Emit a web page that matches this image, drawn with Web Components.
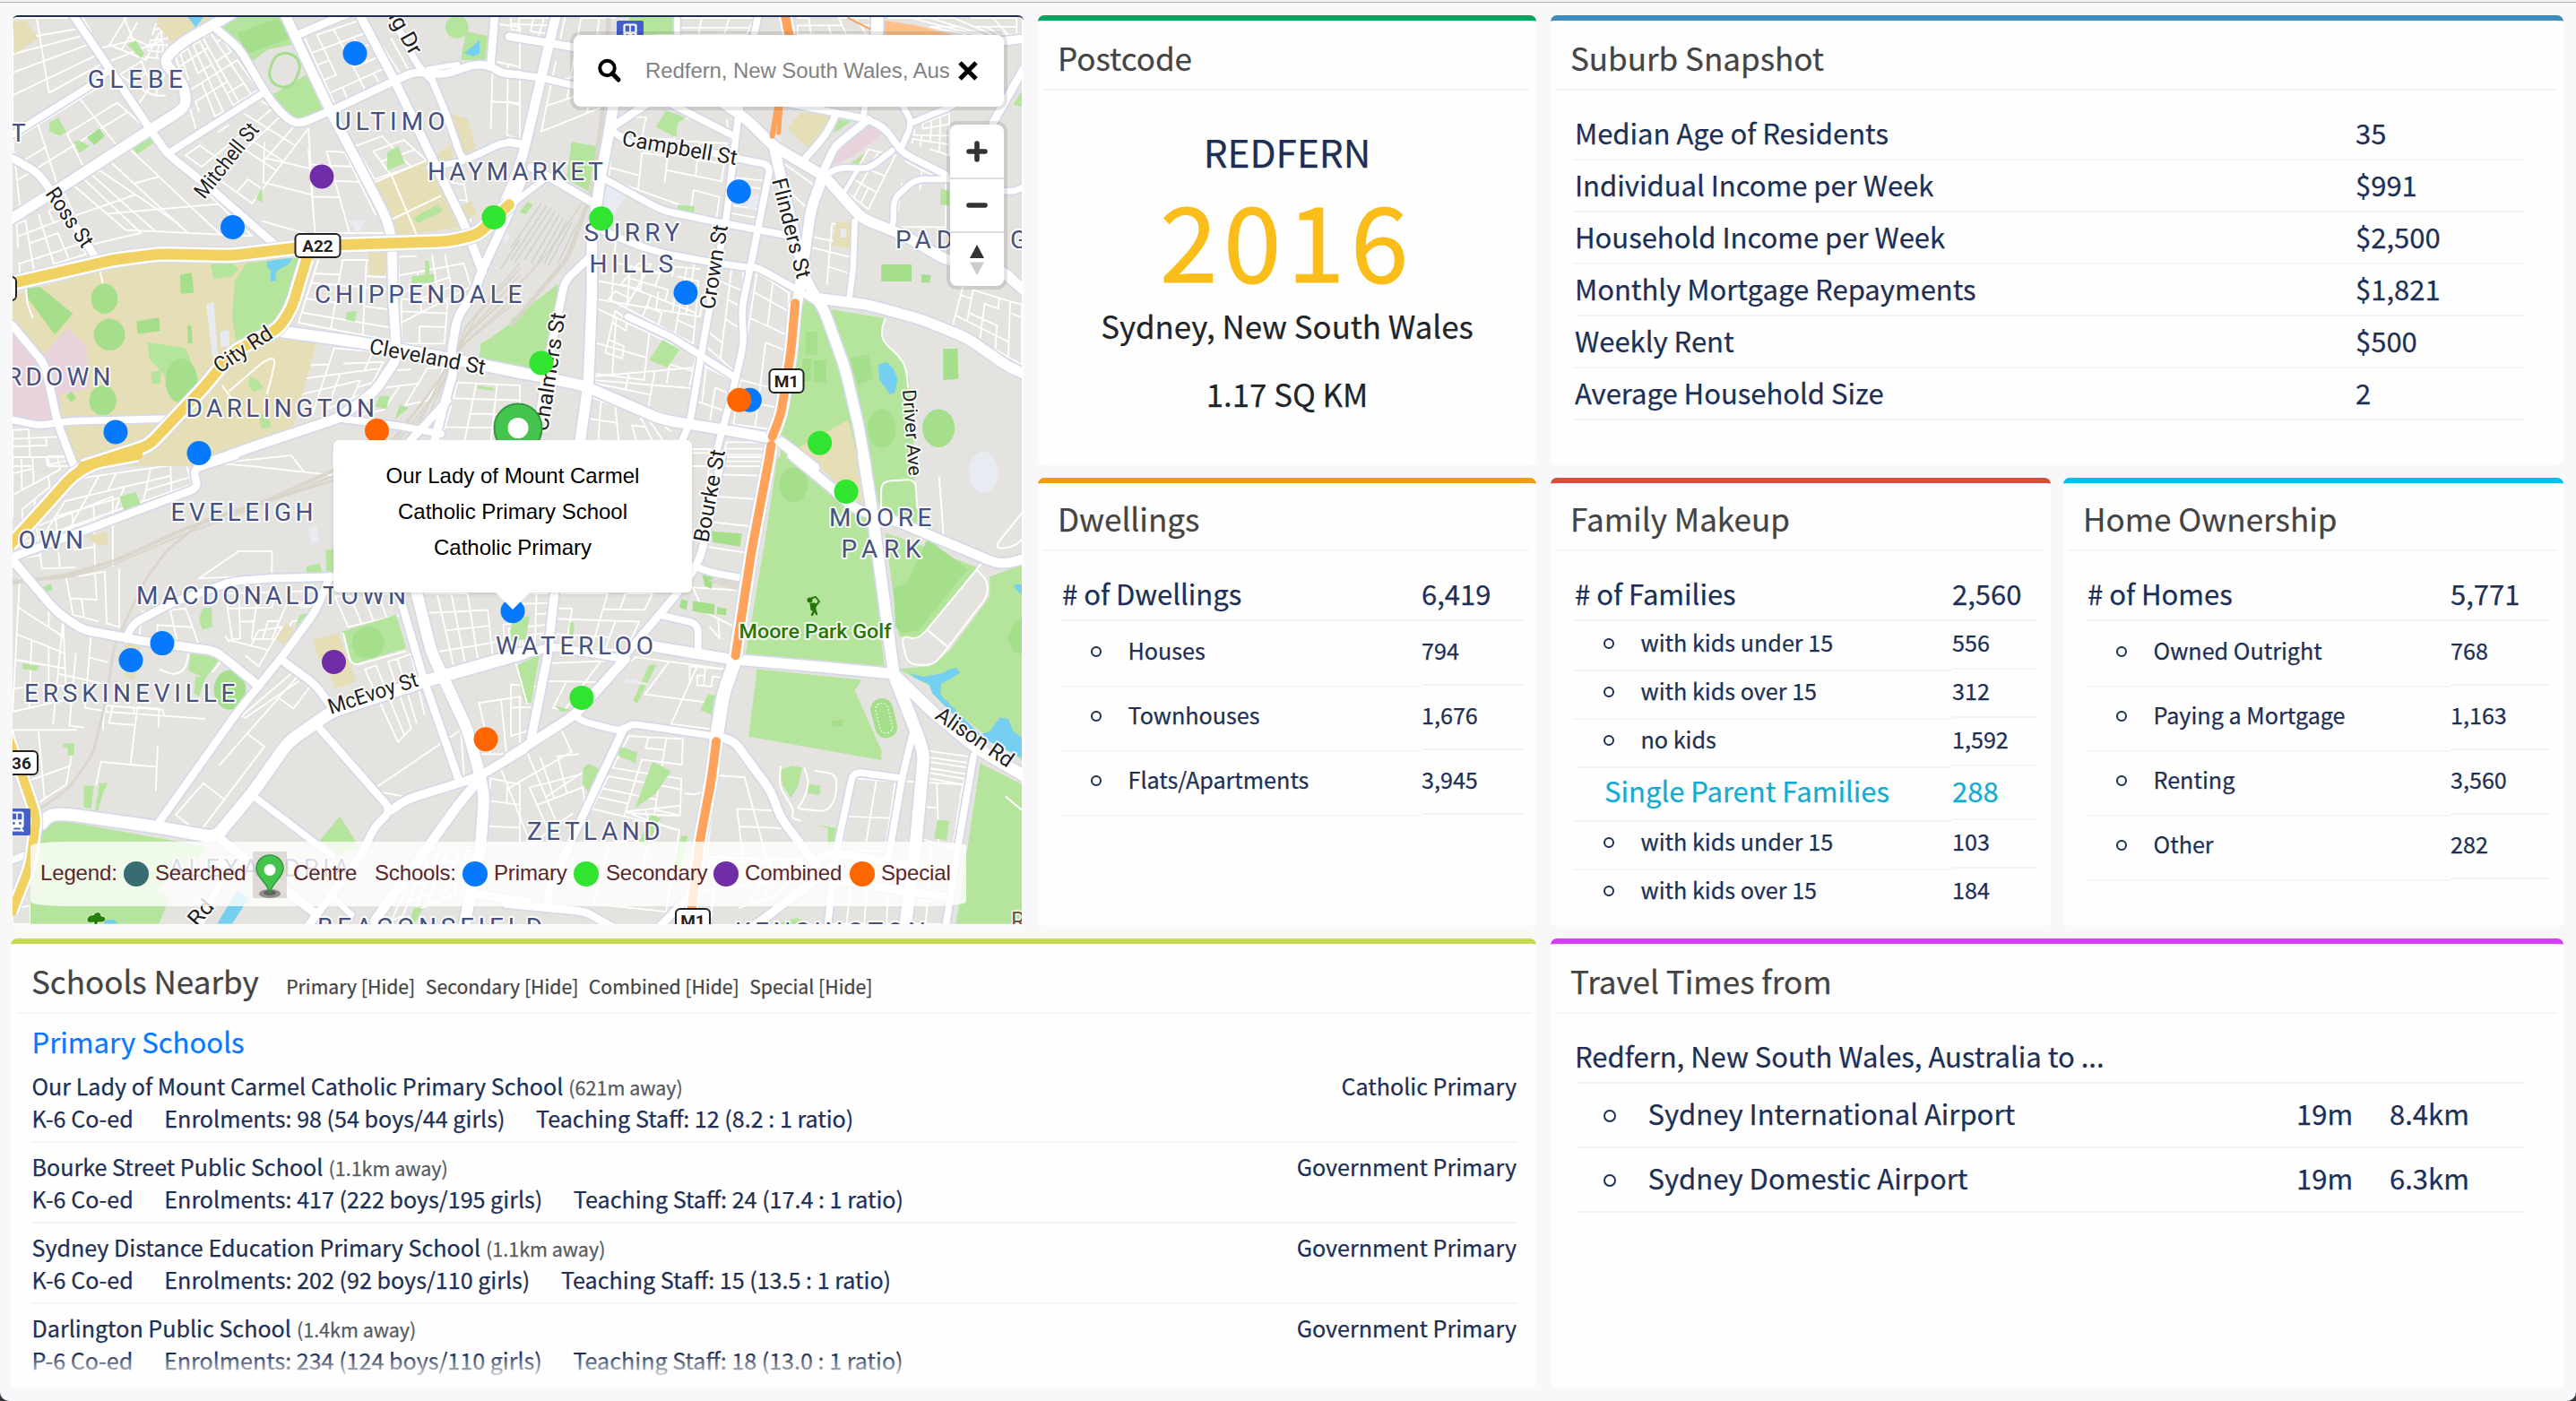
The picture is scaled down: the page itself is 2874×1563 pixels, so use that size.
<!DOCTYPE html>
<html lang="en">
<head>
<meta charset="utf-8">
<title>Suburb dashboard</title>
<style>
  html { background: #33363c; }
  body { margin: 0; width: 2874px; height: 1563px; overflow: hidden; font-family: "Noto Sans CJK SC", "Noto Sans", sans-serif; color: #1d2f54; }
</style>
</head>
<body>
<suburb-dashboard></suburb-dashboard>

<script>
const define = (name, html, setup) => {
  const tpl = document.createElement('template');
  tpl.innerHTML = html;
  customElements.define(name, class extends HTMLElement {
    connectedCallback() {
      if (this.shadowRoot) return;
      const root = this.attachShadow({ mode: 'open' });
      root.append(tpl.content.cloneNode(true));
      if (setup) setup.call(this, root);
    }
  });
};

/* ---------- cards ---------- */
define('info-card', `
<style>
  :host { display: flex; flex-direction: column; box-sizing: border-box; min-width: 0; overflow: hidden; background: #fefefe; border-top: 6px solid var(--accent); border-radius: 7px; -webkit-text-stroke: .25px; }
  header { display: flex; flex: none; align-items: baseline; box-sizing: border-box; height: var(--head, 78px); margin: 0 8px 0 6px; padding: var(--head-pad, 5px) 0 0 16px; border-bottom: 2px solid #f4f4f5; color: #444; font-size: 35px; line-height: 72px; }
  :host([wide]) header { margin: 0 6px 0 8px; padding-left: 15px; }
  h2 { margin: 0; font: inherit; white-space: nowrap; }
  .body { flex: 1; min-height: 0; display: flex; flex-direction: column; }
</style>
<header><h2></h2><slot name="extra"></slot></header>
<div class="body"><slot></slot></div>`, function (root) {
  root.querySelector('h2').textContent = this.getAttribute('heading');
});

define('data-row', `
<style>
  :host { display: flex; align-items: flex-start; height: var(--h, 58px); font-size: 31px; line-height: 54px; white-space: nowrap; }
  div { box-sizing: border-box; height: 100%; border-bottom: 2px solid #f4f4f5; }
  .label { width: var(--split); flex: none; padding-left: 1px; }
  .value { flex: 1; }
  i { display: none; box-sizing: border-box; flex: none; width: 12px; height: 12px; margin: 0 29.500px 0 33px; border: 2px solid #1d2f54; border-radius: 50%; }
  :host([kind=item]) { font-size: 25.15px; line-height: calc(var(--h) - 6.500px); }
  :host([kind=item]) .label { display: flex; align-items: flex-start; height: calc(100% + 2px); padding: 0; }
  :host([kind=item]) i { display: block; margin-top: calc(var(--h) / 2 - 8px); }
  :host([kind=group]) { color: #14abd0; line-height: 53px; }
  :host([kind=group]) .label { height: calc(100% + 2px); padding-left: 34px; }
  :host([plain]) div { border-color: transparent; }
</style>
<div class="label"><i></i><span class="t"></span></div><div class="value"></div>`, function (root) {
  root.querySelector('.t').textContent = this.getAttribute('label');
  root.querySelector('.value').textContent = this.getAttribute('value');
});

define('postcode-facts', `
<style>
  :host { display: flex; flex-direction: column; align-items: center; padding-top: 28px; color: #212529; font-size: 34.8px; white-space: nowrap; }
  .name { color: #1d2f54; font-size: 42.3px; line-height: 80px; }
  .code { color: #fbbd1a; font-size: 116px; line-height: 128px; letter-spacing: 6.6px; margin-top: -9px; -webkit-text-stroke: 1px; }
  .place { line-height: 76px; margin-top: -3px; }
  .area { line-height: 76px; }
</style>
<div class="name">REDFERN</div><div class="code">2016</div>
<div class="place">Sydney, New South Wales</div><div class="area">1.17 SQ KM</div>`);

define('school-filters', `
<style>
  :host { display: flex; gap: 11.500px; margin-left: 30.500px; font-size: 21.2px; line-height: 40px; white-space: nowrap; }
</style>
<span>Primary [Hide]</span><span>Secondary [Hide]</span><span>Combined [Hide]</span><span>Special [Hide]</span>`);

define('school-entry', `
<style>
  :host { display: block; flex: none; box-sizing: border-box; height: 90px; padding-top: 8px; border-bottom: 2px solid #f4f4f5; font-size: 25.1px; line-height: 36px; white-space: nowrap; }
  .line { display: flex; align-items: baseline; height: 36px; }
  .away { margin-left: 6px; color: #555a60; font-size: 21.5px; line-height: 30px; }
  .sector { margin-left: auto; }
  .facts { gap: 34.6px; }
</style>
<div class="line"><span class="name"></span><span class="away"></span><span class="sector"></span></div>
<div class="line facts"><span class="years"></span><span class="enrol"></span><span class="staff"></span></div>`, function (root) {
  for (const k of ['name', 'away', 'sector', 'years', 'enrol', 'staff']) root.querySelector('.' + k).textContent = this.dataset[k];
});

define('school-list', `
<style>
  :host { position: relative; display: flex; flex-direction: column; height: 410px; margin: 0 22px 0 23.500px; overflow: hidden; }
  h3 { flex: none; margin: 0; height: 58px; color: #0779ff; font: inherit; font-size: 31.1px; line-height: 61px; margin-bottom: -4px; }
  .fade { position: absolute; inset: auto 0 0 0; height: 30px; background: linear-gradient(rgba(254,254,254,0), #fefefe); }
</style>
<h3>Primary Schools</h3><slot></slot><div class="fade"></div>`);

define('travel-row', `
<style>
  :host { display: flex; align-items: flex-start; box-sizing: border-box; height: 72px; border-bottom: 2px solid #f4f4f5; font-size: 31px; line-height: 65px; white-space: nowrap; }
  i { box-sizing: border-box; flex: none; width: 14px; height: 14px; margin: 29px 30px 0 33px; border: 2px solid #1d2f54; border-radius: 50%; }
  .place { width: 729px; padding-left: 5.500px; box-sizing: border-box; } .time { width: 104px; }
</style>
<i></i><span class="place"></span><span class="time"></span><span class="dist"></span>`, function (root) {
  for (const k of ['place', 'time', 'dist']) root.querySelector('.' + k).textContent = this.dataset[k];
});

/* ---------- map controls ---------- */
define('map-search', `
<style>
  :host { display: flex; align-items: center; box-sizing: border-box; width: 480px; height: 80px; padding: 0 24px; background: #fff; border-radius: 8px; box-shadow: 0 0 0 4px rgba(0,0,0,.1); font: 24px "Liberation Sans", Arial, sans-serif; }
  svg { flex: none; }
  .q { width: 339px; margin: 0 5px 0 24px; overflow: hidden; color: #828282; white-space: nowrap; letter-spacing: -.08px; }
</style>
<svg width="32" height="32" viewBox="0 0 32 32" fill="none" stroke="#000"><circle cx="13.5" cy="13" r="8.2" stroke-width="4"/><path d="M19 18.800L26 26" stroke-width="5" stroke-linecap="round"/></svg>
<span class="q">Redfern, New South Wales, Australia</span>
<svg width="32" height="32" viewBox="0 0 32 32" fill="none" stroke="#000" stroke-width="5"><path d="M7 7L25 25M25 7L7 25"/></svg>`);

define('map-zoom', `
<style>
  :host { display: flex; flex-direction: column; width: 60px; height: 180px; background: #fff; border-radius: 8px; box-shadow: 0 0 0 4px rgba(0,0,0,.1); }
  div { flex: 1; display: grid; place-items: center; }
  div + div { border-top: 2px solid #ddd; }
</style>
<div><svg width="26" height="28" viewBox="-13 -15 26 28" stroke="#333" stroke-width="5.600" stroke-linecap="round"><path d="M-9 0H9M0 -9V9"/></svg></div>
<div><svg width="26" height="26" viewBox="-13 -13 26 26" stroke="#333" stroke-width="5.600" stroke-linecap="round"><path d="M-9 0H9"/></svg></div>
<div><svg width="20" height="36" viewBox="0 0 20 36"><path d="M10 1L18 16H2Z" fill="#333"/><path d="M2 20.500H18L10 35Z" fill="#ccc"/></svg></div>`);

define('map-popup', `
<style>
  :host { display: block; box-sizing: border-box; width: 400px; height: 170px; padding-top: 20px; background: #fff; border-radius: 6px; box-shadow: 0 2px 4px rgba(0,0,0,.12); color: #000; font: 24px/40px "Liberation Sans", Arial, sans-serif; text-align: center; }
  svg { position: absolute; left: 180px; top: 169px; }
</style>
<div>Our Lady of Mount Carmel</div><div>Catholic Primary School</div><div>Catholic Primary</div>
<svg width="40" height="21"><path d="M0 0H40L20 20Z" fill="#fff"/></svg>`);

const PIN = `<ellipse cx="0" cy="22" rx="12" ry="5" fill="#000" opacity=".35"/><ellipse cx="0" cy="21" rx="7" ry="3" fill="#000" opacity=".3"/><path d="M0 21C-3 9-15 4-15-6A15 15 0 0 1 15-6C15 4 3 9 0 21Z" fill="#45c44d" stroke="#329a3b" stroke-width="1.500"/><circle cy="-4.500" r="6.500" fill="#fff"/>`;

define('map-legend', `
<style>
  :host { display: flex; align-items: center; box-sizing: border-box; width: 1044px; height: 72px; padding-left: 11px; background: rgba(255,255,255,.8); border-radius: 40px / 5px; color: #5b2629; font: 24px "Liberation Sans", Arial, sans-serif; white-space: nowrap; letter-spacing: -.15px; }
  span { flex: none; box-sizing: border-box; padding-bottom: 3px; }
  i { flex: none; width: 28px; height: 28px; border-radius: 50%; }
  svg { flex: none; margin: 1px 7px 0 0; background: rgba(190,180,175,.45); }
</style>
<span style="width:93px">Legend:</span><i style="background:#376c72"></i><span style="width:116px;padding-left:7px">Searched</span>
<svg width="38" height="52" viewBox="-19 -26 38 52"><g transform="translate(0 -1)">${PIN}</g></svg>
<span style="width:91px">Centre</span><span style="width:98px">Schools:</span>
<i style="background:#0779ff"></i><span style="width:96px;padding-left:7px">Primary</span>
<i style="background:#30e430"></i><span style="width:128px;padding-left:8px">Secondary</span>
<i style="background:#6f2da8"></i><span style="width:124px;padding-left:7px">Combined</span>
<i style="background:#ff6600"></i><span style="padding-left:7px">Special</span>`);

/* ---------- street map ---------- */
/* The sheet is split in four tiles; each has its own origin and grid step. */
const TILES = {
  A: [0, 0, 2.703, 3], B: [570, 0, 2.658, 3], C: [0, 510, 2.703, 2.958], D: [570, 510, 2.658, 2.958]
};
const pt = (t, x, y) => { const [ox, oy, sx, sy] = TILES[t]; return [(ox + x / sx), (oy + y / sy)]; };
const pts = (t, s) => { const n = s.trim().split(/[\s,]+/).map(Number), out = []; for (let i = 0; i < n.length; i += 2) out.push(pt(t, n[i], n[i + 1])); return out; };
const f1 = v => v.toFixed(1);
const line = p => 'M' + p.map(q => f1(q[0]) + ' ' + f1(q[1])).join('L');
/* corners rounded by running quadratic curves through each bend */
const curve = p => {
  let d = `M${f1(p[0][0])} ${f1(p[0][1])}`;
  for (let i = 1; i < p.length - 1; i++) {
    const [a, b, c] = [p[i - 1], p[i], p[i + 1]];
    const la = Math.hypot(a[0] - b[0], a[1] - b[1]), lc = Math.hypot(c[0] - b[0], c[1] - b[1]);
    const ra = Math.min(.5, 10 / la), rc = Math.min(.5, 10 / lc);
    d += `L${f1(b[0] + (a[0] - b[0]) * ra)} ${f1(b[1] + (a[1] - b[1]) * ra)}Q${f1(b[0])} ${f1(b[1])} ${f1(b[0] + (c[0] - b[0]) * rc)} ${f1(b[1] + (c[1] - b[1]) * rc)}`;
  }
  const e = p[p.length - 1];
  return d + `L${f1(e[0])} ${f1(e[1])}`;
};

const GREEN = '#b5e59d', DARK = '#a6df8c', TAN = '#e6deb6', PINK = '#e8d2db', WATER = '#75cff0', SLAB = '#e9ebf2';

const AREAS = [
  ['A', TAN, '38,990 340,890 480,872 720,870 950,860 890,1020 870,1110 955,1150 880,1440 600,1560 210,1560 190,1400 160,1300 120,1170 38,1080'],
  ['A', PINK, '38,1120 70,1135 120,1195 205,1098 260,1160 270,1300 180,1320 185,1400 120,1410 38,1395'],
  ['A', GREEN, '690,55 850,55 880,150 810,165 760,205 720,140 665,85'],
  ['A', DARK, '715,110 840,60 872,130 745,180'],
  ['A', GREEN, '820,318 925,250 975,365 905,400 870,385'],
  ['A', GREEN, '1405,105 1470,120 1463,203 1390,200'],
  ['A', WATER, '1430,150 1447,133 1446,180 1425,188 1400,178'],
  ['A', TAN, '475,55 640,55 600,90 520,145 475,85'],
  ['A', WATER, '565,55 615,55 590,92'],
  ['A', TAN, '38,75 75,65 115,130 45,180'],
  ['A', GREEN, '385,150 410,135 435,180 425,195'], ['A', GREEN, '150,410 175,393 200,440 180,455 148,438'],
  ['A', GREEN, '222,475 240,470 270,490 240,512'], ['A', DARK, '262,460 300,430 315,455 285,485'],
  ['A', GREEN, '398,495 450,460 462,480 415,515'], ['A', GREEN, '1168,510 1200,488 1222,545 1168,570'],
  ['A', GREEN, '772,665 790,625 792,678'],
  ['A', TAN, '1130,610 1290,535 1390,760 1200,790'], ['A', GREEN, '1245,730 1320,685 1337,705 1260,748'],
  ['A', TAN, '1360,385 1410,395 1435,500 1398,515'], ['A', TAN, '1315,515 1360,490 1370,540 1340,555'],
  ['A', TAN, '1390,690 1420,672 1438,715 1405,740'], ['A', TAN, '1110,845 1165,845 1162,920 1115,922'],
  ['A', GREEN, '745,880 905,862 880,1010 840,1090 715,1165 700,1060 708,940'],
  ['A', WATER, '805,875 840,868 882,864 870,885 842,900 830,915 833,940 815,942 818,905 805,892'],
  ['A', DARK, '80,965 120,960 220,1050 165,1120 85,1000'],
  ['A', DARK, '412,1075 480,1063 483,1108 415,1118'], ['A', DARK, '543,920 578,912 585,980 545,983'],
  ['A', GREEN, '635,885 700,880 720,900 700,925 645,935'],
  ['A', GREEN, '445,1145 560,1165 605,1290 545,1350 500,1260 450,1200'], ['A', GREEN, '455,1245 485,1240 485,1285 458,1285'],
  ['A', DARK, '200,1325 215,1312 230,1330 215,1348'], ['A', DARK, '565,1090 577,1090 580,1150 567,1150'],
  ['A', SLAB, '622,1018 645,1012 657,1195 640,1190'], ['A', SLAB, '665,1110 690,1105 692,1160 665,1160'], ['A', SLAB, '1045,740 1100,735 1085,780 1070,778 1065,750'],
  ['A', SLAB, '1500,790 1515,765 1538,790 1525,815'],
  ['A', GREEN, '755,1260 780,1275 795,1300 765,1312 748,1290'],
  ['A', GREEN, '1568,1060 1480,1130 1450,1150 1445,1200 1568,1230'],
  ['A', GREEN, '1150,1290 1170,1248 1180,1255 1160,1300'], ['A', GREEN, '1145,1325 1175,1325 1165,1370 1132,1360'],
  ['A', GREEN, '1045,1045 1075,1040 1070,1078 1043,1070'], ['A', GREEN, '1242,925 1282,920 1282,873 1294,873 1296,918 1310,918 1308,945 1242,948'],
  ['A', GREEN, '1440,1290 1490,1298 1487,1308 1440,1300'], ['A', GREEN, '900,1450 940,1440 943,1448 905,1465'],
  ['A', GREEN, '778,1390 805,1385 820,1430 790,1435'], ['A', GREEN, '1190,1405 1205,1355 1232,1365'],

  ['B', GREEN, '870,1000 930,1020 990,1240 1010,1410 1060,1560 798,1560 800,1460 830,1250'],
  ['B', TAN, '1000,1405 1035,1560 890,1560 850,1500'],
  ['B', GREEN, '945,1035 1110,1065 1100,1130 1160,1200 1180,1260 1200,1560 1065,1560 1000,1230'],
  ['B', WATER, '1090,1220 1115,1212 1135,1235 1147,1270 1138,1315 1125,1320 1092,1270'],
  ['B', DARK, '1282,1167 1325,1167 1327,1268 1282,1272'], ['B', DARK, '1098,885 1188,885 1188,942 1098,942'], ['B', DARK, '1218,918 1245,920 1243,946 1218,946'],
  ['B', DARK, '1005,1200 1060,1185 1075,1265 1030,1290'], ['B', DARK, '875,1110 908,1110 908,1187 873,1185'], ['B', DARK, '898,1205 935,1205 935,1280 898,1280'], ['B', DARK, '865,1200 890,1200 890,1275 862,1275'],
  ['B', GREEN, '460,370 520,395 495,410 490,460 430,425'], ['B', GREEN, '180,475 255,490 230,640 165,600'],
  ['B', TAN, '860,375 950,390 940,440 880,495 820,430'], ['B', GREEN, '970,400 1010,405 958,445'],
  ['B', PINK, '1050,410 1110,440 1020,520 930,565 950,520'], ['B', GREEN, '1005,550 1050,510 1030,555'],
  ['B', GREEN, '495,685 545,690 543,712 495,705'], ['B', GREEN, '450,1137 500,1170 465,1230 410,1205'],
  ['B', TAN, '965,740 1010,745 1003,832 953,822'], ['B', SLAB, '978,765 995,765 993,795 978,795'],
  ['B', GREEN, '0,1070 140,950 135,1040 110,1200 95,1250 0,1230'], ['B', GREEN, '350,50 487,50 485,115 350,115'],
  ['B', GREEN, '1275,630 1300,640 1300,688 1273,685'], ['B', GREEN, '25,710 50,675 65,685 45,717'], ['B', GREEN, '612,900 625,905 615,975 603,975'],
  ['B', GREEN, '1490,350 1515,305 1515,357'], ['B', SLAB, '285,610 343,655 300,730 268,735'], ['B', SLAB, '700,690 712,655 738,650 738,678 720,705 705,700'],
  ['B', '#ffc08c', '1108,68 1200,85 1310,117 1108,117'], ['B', SLAB, '775,440 800,450 805,510 772,500'],
  ['B', SLAB, '1360,1560 1370,1530 1400,1517 1430,1530 1445,1560'],

  ['C', GREEN, '130,1210 190,1200 620,1285 510,1455 480,1540 92,1540 92,1280'],
  ['C', GREEN, '1032,575 1195,520 1225,630 1060,685'], ['C', TAN, '943,605 1020,580 1040,640 1058,690 1075,740 1010,765 985,680 960,660'],
  ['C', GREEN, '360,130 410,115 425,160 375,178'], ['C', TAN, '258,262 320,245 325,285 300,295'],
  ['C', GREEN, '575,645 668,655 640,700 620,730 568,705'], ['C', GREEN, '590,725 620,725 600,790 585,780'],
  ['C', GREEN, '610,500 638,495 640,560 610,570 600,535'], ['C', TAN, '865,548 890,575 858,622 832,600'], ['C', GREEN, '905,520 930,515 888,565'],
  ['C', GREEN, '923,360 965,350 970,380 925,382'], ['C', GREEN, '982,308 1006,303 1006,382 985,375'], ['C', GREEN, '122,430 155,418 158,440 130,447'],
  ['C', GREEN, '68,680 120,690 110,705 68,700'], ['C', GREEN, '190,945 225,945 222,985 205,985 205,960 190,955'],
  ['C', GREEN, '253,1085 283,1085 280,1110 275,1160 253,1155'], ['C', GREEN, '300,1075 325,1075 310,1110 295,1170 287,1165'],
  ['C', GREEN, '1025,1185 1085,1290 1000,1320 965,1265'], ['C', TAN, '375,620 425,615 420,650 405,735 378,730'],
  ['C', WATER, '715,1430 750,1455 700,1540 655,1540'], ['C', '#e9dfd9', '630,1290 700,1300 520,1460 470,1430'],
  ['C', WATER, '315,1528 345,1526 355,1540 315,1540'], ['C', GREEN, '1250,1485 1275,1490 1250,1540 1232,1540'],
  ['C', SLAB, '930,235 955,228 962,280 940,285'],

  ['D', GREEN, '790,0 830,0 900,60 1020,180 1060,180 1107,692 695,655 750,300'], ['D', TAN, '885,0 1025,0 1042,155 1010,130'],
  ['D', GREEN, '1060,0 1185,0 1205,130 1205,230 1130,190 1085,150'],
  ['D', GREEN, '1110,250 1200,285 1385,365 1220,590 1200,600 1150,590'], ['D', DARK, '1135,430 1175,415 1235,270 1355,370 1210,570 1160,583 1140,560'],
  ['D', GREEN, '1420,395 1515,355 1515,1000 1400,910 1330,850 1250,760 1150,700 1240,690 1300,640 1420,460'],
  ['D', GREEN, '730,700 1040,735 1020,770 1100,970 1098,1000 705,922'],
  ['D', GREEN, '1392,1010 1515,1080 1515,1540 1320,1540'],
  ['D', WATER, '1185,715 1225,725 1280,713 1300,700 1322,695 1332,712 1275,750 1275,785 1350,870 1392,915 1420,905 1450,860 1475,863 1490,905 1515,925 1515,992 1440,950 1392,925 1340,880 1250,780 1240,750 1195,728'],
  ['D', WATER, '1490,420 1515,420 1515,452 1500,440'],
  ['D', DARK, '595,245 685,252 680,295 640,288 598,280'], ['D', DARK, '505,468 525,475 520,505 500,495'], ['D', DARK, '540,475 605,485 602,520 538,508'], ['D', DARK, '612,495 640,500 638,522 612,518'],
  ['D', GREEN, '15,690 85,650 60,810 40,810'], ['D', GREEN, '0,560 10,530 55,525 45,600 0,610'],
  ['D', GREEN, '410,685 432,685 375,812 362,805'], ['D', GREEN, '562,835 585,782 605,787 595,850'],
  ['D', GREEN, '325,955 375,975 370,1010 318,985'], ['D', GREEN, '420,1005 475,1035 430,1110 368,1158'],
  ['D', GREEN, '215,1025 230,1012 265,1030 235,1115 213,1078'], ['D', GREEN, '800,1030 835,1018 865,1025 850,1090 830,1125 805,1080'],
  ['D', GREEN, '880,1078 918,1085 915,1115 880,1108'], ['D', GREEN, '910,1215 972,1225 965,1275 940,1280 940,1225'],
  ['D', GREEN, '1265,1197 1300,1200 1292,1265 1255,1258'], ['D', GREEN, '505,1250 525,1250 500,1370 480,1350'],
  ['D', GREEN, '800,1535 850,1520 890,1545 800,1545'], ['D', GREEN, '130,820 180,835 150,842'], ['D', GREEN, '415,1180 445,1190 400,1290 380,1270'],
  ['D', DARK, '568,390 600,392 595,435 575,425'], ['D', GREEN, '175,545 188,545 185,600 172,600'],
  ['D', DARK, '950,870 985,865 985,885 950,892'], ['D', DARK, '1515,530 1490,550 1472,600 1490,640 1515,650'],
  ['D', SLAB, '340,730 405,745 415,755 340,742'], ['D', '#ddd9d0', '585,405 680,400 670,440 600,415']
];
const BLOBS = [ // tile, colour, centre, radii
  ['A', GREEN, 1378, 90, 35, 38], ['A', DARK, 315, 1000, 40, 50], ['A', DARK, 330, 1120, 47, 53], ['A', DARK, 310, 1340, 41, 50], ['A', DARK, 547, 1275, 48, 75],
  ['B', DARK, 1268, 1433, 48, 64], ['B', DARK, 1100, 1435, 42, 65], ['C', DARK, 1110, 612, 49, 53], ['C', DARK, 693, 768, 48, 65],
  ['D', DARK, 838, 92, 42, 58], ['D', SLAB, 1402, 50, 43, 68]
];
/* quads of local streets: tile, four corners, divisions across and down */
const BLOCKS = [
  ['A', '38,60 220,60 330,240 38,440', 2, 6], ['A', '38,470 300,290 440,430 60,690', 4, 3], ['A', '250,60 480,60 500,240 430,410', 2, 7],
  ['A', '530,190 650,100 780,300 590,430', 7, 6], ['A', '470,80 510,60 500,200 440,190', 2, 6], ['A', '200,600 450,460 760,790 380,770', 4, 3], ['A', '190,640 300,570 540,750 270,820', 2, 2],
  ['A', '560,520 790,340 930,430 760,680', 5, 4], ['A', '800,400 930,430 950,790 790,740', 1, 5], ['A', '930,500 1040,510 1160,780 950,780', 2, 5],
  ['A', '1070,490 1190,440 1290,540 1130,600', 3, 3], ['A', '920,130 1080,70 1180,260 1010,350', 4, 5], ['A', '1100,120 1180,130 1240,250 1190,260', 2, 2],
  ['A', '50,750 180,690 260,850 60,920', 4, 4], ['A', '960,870 1170,870 1180,1140 900,1080', 3, 5], ['A', '1200,860 1390,850 1420,960 1210,1080', 4, 4],
  ['A', '950,1160 1170,1180 1110,1310 880,1420', 4, 5], ['A', '1380,1280 1568,1290 1568,1475 1330,1475', 3, 4], ['A', '1180,1240 1340,1230 1290,1340 1080,1390', 3, 2],
  ['A', '38,1440 190,1430 210,1560 38,1560', 3, 4], ['A', '220,1430 480,1430 430,1490 230,1550', 3, 2], ['A', '560,1440 880,1430 740,1480 610,1540', 3, 1],
  ['A', '1490,80 1568,90 1568,470 1480,430', 2, 3], ['A', '1290,540 1390,560 1420,740 1370,740', 2, 3], ['A', '1210,1000 1350,1010 1340,1150 1210,1150', 2, 3], ['A', '380,60 480,110 440,200 330,150', 3, 2],
  ['B', '0,60 125,60 100,140 0,120', 4, 3], ['B', '160,60 310,60 290,350 90,440', 3, 5], ['B', '300,460 640,480 610,730 290,600', 4, 4], ['B', '660,560 765,570 730,760 635,740', 1, 6],
  ['B', '260,790 590,880 560,1060 250,1000', 7, 3], ['B', '380,880 560,900 540,1150 290,1000', 5, 5], ['B', '250,1030 550,1190 530,1290 240,1250', 4, 2], ['B', '620,880 690,900 670,1250 570,1150', 2, 5],
  ['B', '240,1260 545,1230 520,1410 230,1290', 3, 3], ['B', '550,1210 650,1270 620,1430 535,1410', 3, 3], ['B', '240,1330 440,1410 505,1475 220,1475', 6, 2], ['B', '730,910 825,980 790,1440 660,1420', 2, 7],
  ['B', '890,740 1010,755 1000,980 870,920', 2, 4], ['B', '800,540 900,620 860,780 810,700', 1, 4], ['B', '1170,540 1290,610 1290,760 1140,760', 2, 3], ['B', '1340,960 1515,1020 1515,1220 1310,1090', 5, 4],
  ['B', '1200,420 1300,380 1300,520 1190,480', 4, 4], ['B', '850,60 1060,60 1100,115 850,115', 5, 2], ['B', '430,60 720,60 700,115 430,115', 4, 2], ['B', '1120,60 1500,60 1500,115 1350,115', 6, 2],
  ['B', '1060,500 1140,520 1060,700 990,640', 3, 3], ['B', '330,390 640,400 650,470 310,460', 4, 1], ['B', '520,1480 610,1480 600,1560 520,1560', 1, 4], ['B', '640,1480 760,1480 750,1560 620,1560', 1, 4], ['B', '310,1040 345,1070 330,1200 280,1180', 1, 3],
  ['C', '38,0 200,0 220,50 38,260', 5, 4], ['C', '240,70 560,20 580,90 130,260', 6, 3], ['C', '38,260 340,130 340,360 60,370', 5, 3], ['C', '200,400 360,370 360,560 220,520', 4, 2],
  ['C', '60,390 190,530 200,800 38,840', 3, 5], ['C', '190,540 330,590 310,900 160,880', 3, 4], ['C', '38,900 230,900 200,1080 90,1160', 2, 3], ['C', '340,820 480,830 470,1100 290,1080', 2, 4],
  ['C', '430,510 560,500 600,620 420,590', 3, 2], ['C', '680,450 980,440 880,600 700,600', 6, 3], ['C', '680,590 850,560 780,690 690,610', 2, 2], ['C', '320,820 690,850 700,870 320,840', 4, 1],
  ['C', '900,720 940,750 600,1240 530,1180', 1, 5], ['C', '720,850 860,700 900,740 740,860', 1, 2], ['C', '1010,460 1190,450 1210,520 1050,560', 4, 1], ['C', '1100,700 1240,650 1280,850 1200,940', 4, 1],
  ['C', '1270,450 1568,450 1568,640 1330,700', 6, 4], ['C', '1390,820 1568,790 1568,980 1440,980', 3, 1], ['C', '1120,1100 1390,900 1400,1060 1220,1120', 1, 1], ['C', '1280,1290 1430,1300 1400,1430 1180,1530', 6, 4], ['C', '38,1490 92,1480 92,1540 38,1540', 2, 1], ['C', '600,400 720,310 820,310 820,390', 1, 1],
  ['C', '650,20 1006,-20 1006,60 760,30', 3, 1], ['C', '1480,1060 1568,1080 1568,1280 1460,1280', 2, 3],
  ['D', '130,450 420,450 340,640 120,620', 4, 4], ['D', '-20,450 115,450 100,620 0,640', 3, 5], ['D', '590,0 745,0 700,380 560,350', 1, 5], ['D', '540,430 680,440 650,640 590,560', 2, 2], ['D', '530,690 630,700 620,760 530,750', 4, 2],
  ['D', '370,660 640,700 610,900 190,840', 3, 2], ['D', '120,680 330,670 190,840 90,820', 3, 2], ['D', '350,920 510,930 500,1230 240,1160', 3, 7], ['D', '-40,1000 150,900 240,1120 60,1280', 2, 3], ['D', '20,1000 200,980 220,1150 110,1230', 3, 3],
  ['D', '610,1050 740,1060 860,1330 580,1320', 3, 3], ['D', '1170,1070 1340,1080 1310,1290 1220,1260', 2, 2], ['D', '1240,970 1370,990 1340,1080 1240,1060', 1, 5], ['D', '1020,1060 1140,1070 1110,1300 980,1300', 2, 2],
  ['D', '560,1330 880,1340 780,1450 560,1530', 6, 2], ['D', '970,1370 1160,1380 1160,1540 950,1540', 4, 3], ['D', '1190,1280 1310,1300 1290,1540 1180,1540', 2, 3], ['D', '170,1300 500,1230 460,1500 120,1460', 3, 2], ['D', '340,1170 500,1150 490,1230 360,1180', 3, 2], ['D', '0,750 100,760 60,900 0,920', 1, 2]
];
const LANES = [
  ['B', '1110,1065 1098,1110 1105,1145 1150,1190 1172,1230 1178,1300'], ['D', '1380,370 1412,405 1415,455 1260,680 1225,688 1175,680 1158,590 1195,600 1220,588 1395,352'],
  ['D', '1232,568 1298,628'], ['D', '1270,65 1283,260'], ['D', '1515,185 1435,295 1460,303 1500,290 1515,270'], ['D', '1098,170 1098,80 1200,73 1205,170'],
  ['A', '670,1290 720,1370'], ['A', '690,1310 800,1205 828,1198 828,1220 805,1320'], ['A', '300,900 310,948'], ['A', '78,960 82,1020 100,1065'],
  ['A', '1180,735 1330,655'], ['A', '1130,610 1290,535'], ['A', '1180,585 1258,790'], ['D', '800,1020 795,1085 840,1165 830,1190 860,1200'], ['D', '870,1025 885,1075 865,1140 845,1160 940,1170 965,1120 965,1045 900,1035'],
  ['C', '1035,580 1060,690 1225,640'], ['C', '480,700 525,720 560,700 570,640'], ['D', '515,1110 560,1115 610,1050'], ['D', '15,680 48,815'], ['C', '640,710 670,668'],
  ['A', '1480,340 1568,345'], ['A', '330,230 460,320 500,320'], ['D', '1467,1120 1515,1165']
];
const MAJORS = [ // tile, width, points
  ['A', 9, '220,50 330,230 445,420 505,515 640,635 830,820'], ['A', 12, '35,732 180,630 445,440 545,370 562,345 555,290 530,250 498,215 505,185 560,135 640,85 700,45'],
  ['A', 8, '38,450 290,275 330,230'], ['A', 9, '38,530 110,575 170,660 230,760 290,865'], ['A', 9, '640,85 720,160 800,310 840,370 880,408 910,412 1000,370 1190,270 1250,240 1340,250 1430,215 1480,220 1510,245 1568,250'],
  ['A', 8, '505,515 795,310'], ['A', 11, '860,50 910,170 1000,380 1100,590 1165,730 1182,800 1185,1000 1197,1200 1130,1310 1020,1400 750,1500 600,1560'],
  ['A', 10, '1085,50 1190,270 1290,500 1400,750 1455,910'], ['A', 9, '900,115 1050,45'], ['A', 8, '1300,260 1345,380 1395,540 1520,475 1575,482'], ['A', 7, '1295,560 1395,540'],
  ['A', 8, '1180,50 1260,220 1300,265'], ['A', 6, '1290,232 1380,215'], ['A', 9, '1492,50 1480,215'], ['A', 10, '1575,600 1540,700 1455,900 1430,980 1380,1060 1360,1180 1370,1240 1345,1330 1310,1480'],
  ['A', 9, '1350,1340 1225,1490'], ['A', 13, '850,1110 1050,1140 1180,1165 1360,1200 1580,1250'], ['A', 9, '38,1090 135,1220 175,1420 225,1565'], ['A', 8, '30,1403 120,1425 200,1410 540,1400'], ['A', 8, '1020,1400 1200,1425 1330,1452'],
  ['B', 9, '-5,122 120,145 195,160'], ['B', 11, '135,45 90,260 40,500 15,590 -20,680'], ['B', 9, '-5,475 40,485'], ['B', 7, '-5,690 110,590'], ['B', 9, '60,560 110,590 245,680'], ['B', 8, '-5,247 90,260 200,290'],
  ['B', 12, '305,345 290,450 265,600 240,800 240,1000 230,1280 205,1480'], ['B', 9, '300,425 400,350'], ['B', 8, '295,435 350,475'], ['B', 8, '590,510 690,535 770,552 710,895 685,1030 690,1150 660,1300 610,1510'],
  ['B', 8, '470,345 660,455'], ['B', 12, '630,345 700,400 780,490 930,590 1040,730 1170,790 1290,870 1450,900 1520,970'], ['B', 8, '733,50 675,380 640,720 610,900 570,1150 530,1420 505,1480'],
  ['B', 8, '280,600 450,705 620,745 830,790'], ['B', 8, '250,760 370,820 460,850 580,875 700,895 730,895 850,970 900,1005'], ['B', 9, '235,860 160,940 140,1050 100,1270 75,1475'],
  ['B', 12, '-5,1240 215,1290 450,1405 640,1440 790,1470 900,1565'], ['B', 8, '347,1060 480,1130 660,1260'], ['B', 12, '780,490 810,640 875,940 930,1040 990,1230 1030,1420 1052,1560'],
  ['B', 12, '925,590 890,700 865,900 850,1010'], ['B', 9, '1060,400 960,490 920,590'], ['B', 8, '965,380 935,450 865,540'], ['B', 8, '820,345 1060,400 1110,430 1160,510 1290,585'], ['B', 7, '1050,350 1045,400'],
  ['B', 7, '930,590 970,560 1060,565 1130,505'], ['B', 5, '1030,565 990,640'], ['B', 7, '1020,740 1015,900 1002,1010'], ['B', 7, '1120,770 1135,750 1135,665 1200,600 1300,600'], ['B', 12, '920,1000 1060,1020 1220,1070 1350,1130 1480,1230 1520,1250'],
  ['B', 7, '1160,490 1190,410 1160,350'], ['B', 7, '1190,410 1310,355'], ['B', 9, '1520,230 1430,410'], ['B', 7, '1460,640 1495,640 1520,625'], ['B', 7, '493,50 493,120'], ['B', 14, '1087,50 1085,120'], ['B', 10, '1360,150 1520,130'],
  ['C', 9, '710,-5 580,40 600,100 320,215 38,330'], ['C', 10, '38,340 170,510 250,570 420,605 650,640 780,755'], ['C', 9, '380,600 400,550 520,480 700,410 820,400 1010,395'], ['C', 9, '995,395 950,510 850,660 710,850 470,1220'],
  ['C', 9, '850,670 950,750 1000,825'], ['C', 14, '125,1210 150,1180 200,1178 470,1220 650,1255 760,1110 870,940 1000,840 1280,740 1575,648'], ['C', 9, '1200,440 1280,740 1385,1070'], ['C', 13, '1255,440 1300,640 1410,900 1448,1050 1460,1120 1450,1280 1400,1545'],
  ['C', 9, '960,890 1180,1165 1130,1220 1090,1310 990,1460 930,1545'], ['C', 10, '1180,1165 1225,1130 1400,1070 1450,1050 1580,965'], ['C', 8, '760,1115 1000,1315'], ['C', 11, '1440,1070 1380,1150 1130,1530'], ['C', 10, '660,1255 950,1505'], ['C', 8, '670,1390 605,1540'],
  ['C', 7, '1000,1450 1060,1510'], ['C', 9, '1420,1440 1590,1468'], ['C', 8, '210,-5 228,40'], ['C', 8, '38,1330 92,1305'],
  ['D', 11, '835,-5 950,100 1020,170 1140,210 1440,350 1480,350 1520,335'], ['D', 13, '1045,-5 1070,170 1110,500 1135,710'], ['D', 12, '400,620 640,665 900,690 1135,715'], ['D', 9, '-5,665 120,625 200,640 330,665 500,440 550,360 570,300 625,0'],
  ['D', 8, '545,360 590,380 690,400'], ['D', 10, '130,440 110,650 60,930'], ['D', 11, '-5,990 190,850 340,665'], ['D', 8, '190,855 220,875 330,905 355,880 600,920'], ['D', 10, '600,920 660,935 770,1100 800,1190 905,1345'], ['D', 9, '335,895 240,1120 110,1430 110,1475'],
  ['D', 8, '440,520 555,550 555,645'], ['D', 14, '1135,715 1200,900 1225,980 1200,1280 1170,1545'], ['D', 13, '1135,715 1250,840 1380,960 1520,1050'], ['D', 8, '1190,920 1160,1060 1120,1320'], ['D', 8, '1150,1058 1015,1038 960,1330 940,1545'],
  ['D', 8, '1372,985 1325,1290 1290,1545'], ['D', 9, '895,1335 945,1303 1170,1345'], ['D', 10, '725,1545 860,1430 960,1350'], ['D', 9, '955,1395 1290,1452'], ['D', 9, '-15,1475 220,1500 300,1550'], ['D', 9, '445,1545 520,1460'], ['D', 15, '665,670 630,780 608,935']
];
const HIGHWAYS = [ // tile, colour, width, points
  ['A', '#f1d162', 12, '38,948 340,870 480,850 700,855 950,822 1350,808 1440,785 1535,685'], ['A', '#f1d162', 11.500, '925,865 880,1030 840,1100 700,1180 620,1290 450,1490 250,1562'],
  ['C', '#f1d162', 11.500, '415,-8 280,20 220,60 130,170 30,290'], ['C', '#f1d162', 10, '30,940 70,1060 110,1190 90,1350 36,1500'],
  ['B', '#ffa35c', 10, '813,50 825,117'], ['B', '#ffa35c', 6, '790,355 775,455'], ['B', '#ffa35c', 5, '800,355 794,445'], ['B', '#ffa35c', 2, '1000,60 1065,97'],
  ['B', '#ffa35c', 10, '843,1015 830,1180 800,1390 775,1462'], ['D', '#ffa35c', 10, '772,-40 765,10 715,300 666,655'], ['D', '#ffa35c', 10, '609,938 595,1060 560,1270 535,1500']
];
const RAILS = [
  ['C', 4, '1010,42 790,150 560,235 350,340 200,390 38,415'], ['C', 3, '1010,75 790,150 620,205 500,310 430,420 380,540 345,620 320,800 280,980 210,1090 110,1170'],
  ['C', 2, '1010,60 700,195 520,270 330,360 190,400 38,405'], ['B', 5, '290,60 270,400 240,640 170,860 0,1090'], ['B', 2, '230,650 100,860 0,980'],
  ['A', 2, '1568,880 1400,1100 1360,1250 1200,1475'], ['A', 2, '1568,920 1390,1140 1330,1290 1220,1475'], ['A', 2, '1568,955 1400,1130 1300,1310 1180,1475'], ['A', 2, '1568,980 1380,1170 1340,1240 1240,1475'], ['A', 2, '1568,900 1440,1050 1370,1200 1190,1475'], ['A', 2, '1568,1000 1400,1150 1360,1220 1260,1475']
];
const SIDINGS = [['B', '90,680 0,830'], ['B', '105,690 0,870'], ['B', '120,695 10,880'], ['B', '130,710 40,870'], ['B', '145,715 60,880'], ['B', '155,730 80,880'], ['B', '165,740 100,880'], ['B', '180,745 110,890'], ['B', '195,750 140,880'], ['A', '1568,800 1510,900']];

const DISTRICTS = [ // text, left, right, baseline
  ['GLEBE', 97.800, 201, 97.700], ['ULTIMO', 373.500, 493.500, 144.700], ['HAYMARKET', 477, 670, 200.500], ['CHIPPENDALE', 351, 579.500, 338], ['DARLINGTON', 207.500, 415, 465],
  ['RDOWN', 7, 120.500, 429.500], ['T', 12, 26, 157.700], ['SURRY', 651.500, 755, 268.700], ['HILLS', 657.500, 748, 303.700], ['EVELEIGH', 190.500, 346.500, 580.500], ['OWN', 20.500, 90, 612],
  ['MACDONALDTOWN', 152, 450, 674.300], ['ERSKINEVILLE', 27, 259.500, 782.500], ['WATERLOO', 553, 726, 729.500], ['ZETLAND', 588, 733.500, 936.500], ['MOORE', 925, 1036.500, 587.300], ['PARK', 938.500, 1024.500, 622],
  ['PAD', 999, 1060, 276.500], ['G', 1127, 1142, 276.500], ['ALEXANDRIA', 188, 387, 977.500], ['BEACONSFIELD', 354, 602, 1044], ['KENSINGTON', 820, 1030, 1049]
];
const STREETS = [ // text, baseline start, baseline end, size
  ['Mitchell St', 228, 223, 290, 145, 24], ['Ross St', 50, 216, 92, 278, 24], ['City Rd', 245, 417, 306, 376, 24], ['Cleveland St', 411, 394, 540, 418, 24], ['Campbell St', 693, 162, 821, 184, 24],
  ['Crown St', 797, 346, 812, 252, 24], ['Flinders St', 861, 201, 889, 312, 24], ['Chalmers St', 611, 482, 631, 350, 24], ['Bourke St', 790, 606, 809, 503, 24], ['Driver Ave', 1007, 435, 1014, 531, 21],
  ['McEvoy St', 369, 797, 468, 765, 24], ['Alison Rd', 1042, 801, 1124, 857, 24], ['ing Dr', 426, 6, 458, 63, 24], ['Rd', 220, 1035, 240, 1012, 24]
];
const MARKERS = [
  ['#0779ff', 396, 59.500], ['#6f2da8', 359, 197], ['#0779ff', 259.500, 253.500], ['#30e430', 551, 242.500], ['#0779ff', 129, 482], ['#0779ff', 222, 505.500], ['#ff6600', 420.500, 480.500],
  ['#0779ff', 824.300, 213.700], ['#30e430', 670.800, 243.700], ['#0779ff', 765, 326.500], ['#30e430', 604, 405], ['#0779ff', 836.400, 446.300], ['#ff6600', 824.700, 446.300], ['#30e430', 914.600, 494.300],
  ['#0779ff', 572, 681.700], ['#0779ff', 181, 717.600], ['#0779ff', 146, 736.500], ['#6f2da8', 372.500, 738.500], ['#ff6600', 542, 824.700], ['#30e430', 944, 548.500], ['#30e430', 649, 778.400]
];

function drawBlocks() {
  let d = '', k = 7;
  const rnd = () => (k = (k * 16807) % 2147483647) / 2147483647;
  for (const [t, q, n, m] of BLOCKS) {
    const [a, b, c, e] = pts(t, q);
    /* grid nodes, shifted a little so that the streets are not ruler-straight */
    const at = (i, j) => { const u = i / n, v = j / m; return [0, 1].map(z => (a[z] * (1 - u) + b[z] * u) * (1 - v) + (e[z] * (1 - u) + c[z] * u) * v); };
    const us = [...Array(n + 1)].map((_, i) => i + (i && i < n ? (rnd() - .5) * .4 : 0)), vs = [...Array(m + 1)].map((_, j) => j + (j && j < m ? (rnd() - .5) * .4 : 0));
    for (let i = 0; i <= n; i++) for (let j = 0; j < m; j++) if (rnd() > .18) d += line([at(us[i], vs[j]), at(us[i], vs[j + 1])]);
    for (let j = 0; j <= m; j++) for (let i = 0; i < n; i++) if (rnd() > .26) d += line([at(us[i], vs[j]), at(us[i + 1], vs[j])]);
  }
  return d;
}
const shield = (x, y, w, h, t) => `<rect x="${x}" y="${y}" width="${w}" height="${h}" rx="5" fill="#fff" stroke="#222" stroke-width="2"/><text x="${x + w / 2}" y="${y + h / 2 + 7}" class="sh">${t}</text>`;
const train = (x, y) => `<g transform="translate(${x} ${y})"><rect width="30" height="30" rx="2" fill="#4560cc"/><rect x="8.500" y="4.500" width="13" height="16" rx="1.500" fill="none" stroke="#fff" stroke-width="2.200"/><path d="M8.500 13H21.500M15 5V13" stroke="#fff" stroke-width="1.600"/><path d="M9 13h12v7h-12z" fill="#fff"/><circle cx="11.500" cy="16.500" r="1.400" fill="#4560cc"/><circle cx="18.500" cy="16.500" r="1.400" fill="#4560cc"/><path d="M11 21L8 26M19 21L22 26M9 24.500H21" stroke="#fff" stroke-width="2"/></g>`;

define('street-map', `
<style>
  :host { display: block; width: 1126px; height: 1012px; overflow: hidden; background: #e4e3df; border-radius: 3px 3px 0 5px; }
  svg { display: block; }
  text { font-family: Roboto, "Open Sans", sans-serif; paint-order: stroke; stroke: #fff; stroke-opacity: .85; stroke-linejoin: round; }
  .district { font-size: 28px; fill: #47517f; stroke-width: 4px; }
  .street { fill: #1f1f1f; stroke-width: 4px; }
  .golf { fill: #26760c; font-size: 22.5px; font-weight: 500; stroke-width: 4px; }
  .sh { fill: #222; font-size: 19px; font-weight: 700; text-anchor: middle; stroke: none; }
</style>
<svg width="1126" height="1012" viewBox="14 19 1126 1012"></svg>`, function (root) {
  const svg = root.querySelector('svg');
  let s = `<path d="${drawBlocks()}" fill="none" stroke="#fff" stroke-width="1.800" stroke-linecap="round"/>`;
  for (const [t, c, p] of AREAS) s += `<path d="${line(pts(t, p))}Z" fill="${c}"/>`;
  for (const [t, c, x, y, rx, ry] of BLOBS) { const [px, py] = pt(t, x, y), k = TILES[t]; s += `<ellipse cx="${f1(px)}" cy="${f1(py)}" rx="${f1(rx / k[2])}" ry="${f1(ry / k[3])}" fill="${c}"/>`; }
  s += `<rect x="302" y="59" width="31" height="38" rx="15" transform="rotate(20 317 78)" fill="#e4e3df" stroke="${DARK}" stroke-width="3"/>`;
  s += `<rect x="975" y="780" width="22" height="42" rx="11" transform="rotate(-14 987 800)" fill="${DARK}" stroke="#a6df8c" stroke-width="3"/><rect x="979" y="784" width="14" height="34" rx="7" transform="rotate(-14 987 800)" fill="none" stroke="#fff" stroke-width="1" stroke-dasharray="2 2"/>`;
  for (const [t, w, p] of RAILS) s += `<path d="${curve(pts(t, p))}" fill="none" stroke="#d8d4c9" stroke-width="${w}" opacity=".85"/>`;
  for (const [t, p] of SIDINGS) s += `<path d="${line(pts(t, p))}" stroke="#cfd1cf" stroke-width="1.500"/>`;
  for (const [t, p] of LANES) s += `<path d="${curve(pts(t, p))}" fill="none" stroke="#fff" stroke-width="2"/>`;
  const roads = MAJORS.map(([t, w, p]) => [w, curve(pts(t, p))]);
  for (const [w, d] of roads) s += `<path d="${d}" fill="none" stroke="#d5d9e8" stroke-width="${w + 3}" stroke-linecap="round"/>`;
  for (const [w, d] of roads) s += `<path d="${d}" fill="none" stroke="#fff" stroke-width="${w - .5}" stroke-linecap="round"/>`;
  const ways = HIGHWAYS.map(([t, c, w, p]) => [c, w, curve(pts(t, p))]);
  for (const [c, w, d] of ways) if (w > 6) s += `<path d="${d}" fill="none" stroke="#d5d9e8" stroke-width="${w + 7}"/>`;
  for (const [c, w, d] of ways) if (w > 6) s += `<path d="${d}" fill="none" stroke="#fff" stroke-width="${w + 5}"/>`;
  for (const [c, w, d] of ways) s += `<path d="${d}" fill="none" stroke="${c}" stroke-width="${w}" stroke-linecap="round"/>`;
  for (const [t, x1, x2, y] of DISTRICTS) s += `<text class="district" x="${x1}" y="${y}" textLength="${x2 - x1 + (t.length > 1 ? 3 : 0)}">${t}</text>`;
  for (const [t, x1, y1, x2, y2, fs] of STREETS) { const a = Math.atan2(y2 - y1, x2 - x1) * 180 / Math.PI, l = Math.hypot(x2 - x1, y2 - y1); s += `<text class="street" font-size="${fs}" textLength="${f1(l)}" lengthAdjust="spacingAndGlyphs" transform="translate(${x1} ${y1}) rotate(${f1(a)})">${t}</text>`; }
  s += `<text class="golf" x="824.500" y="711.800" textLength="170" lengthAdjust="spacingAndGlyphs">Moore Park Golf</text>`;
  s += `<text x="1128" y="1036" font-size="25" style="fill:#6e5640;stroke-width:3px">R</text>`;
  s += `<g fill="none" stroke="#26760c" stroke-width="3" stroke-linecap="round" stroke-linejoin="round"><circle cx="903.500" cy="669.500" r="1.500"/><path d="M909 677L914 671L910 666L906 667" stroke-width="2"/><path d="M906 675L909 680L906 686M909 680L911 685" stroke-width="2.500"/><path d="M905 674H909L909 680H906Z" fill="#26760c"/></g>`;
  s += `<path d="M97 1027c0-4 4-7 7-6c4-6 9-3 9 1c6 0 7 6 0 7h-4v3h-4v-3c-5 1-8 0-8-2z" fill="#267f0a" stroke="#fff" stroke-width=".8"/>`;
  s += shield(329.500, 261, 50, 26, 'A22') + shield(858.500, 412, 38, 26, 'M1') + shield(2, 838, 40, 26, '') + `<text class="sh" x="24" y="857.500">36</text>` + shield(754, 1014, 38, 26, 'M1') + shield(-20, 309, 38, 26, '') + train(688, 23) + train(4, 902);
  for (const [c, x, y] of MARKERS) s += `<circle cx="${x}" cy="${y}" r="13.500" fill="${c}"/>`;
  s += `<path d="M551.500 477A26.500 26.500 0 0 1 604.500 477C604.500 488 600 494 596 500H560C556 494 551.500 488 551.500 477Z" fill="#45c44d" stroke="#34983c" stroke-width="2"/><circle cx="578" cy="477.500" r="11.500" fill="#fff"/>`;
  svg.innerHTML = s;
});

define('map-panel', `
<style>
  :host { position: relative; display: block; box-sizing: border-box; margin-left: 2px; border-top: 2px solid #1d2f54; border-radius: 6px; background: #fdfdfe; overflow: hidden; }
  map-search { position: absolute; left: 626px; top: 20px; }
  map-zoom { position: absolute; left: 1046px; top: 120px; }
  map-popup { position: absolute; left: 358px; top: 472px; }
  map-legend { position: absolute; left: 20px; top: 920px; }
</style>
<street-map></street-map><map-popup></map-popup><map-search></map-search><map-zoom></map-zoom><map-legend></map-legend>`);

/* ---------- page ---------- */
define('suburb-dashboard', `
<style>
  :host { display: grid; box-sizing: border-box; width: 2874px; height: 1563px; padding: 17px 14px 0 12px; grid-template: 502px 500px 502px / 1130px 556px 1130px; gap: 14px 16px; background: linear-gradient(#f2f2f5 0 2px, #b3b3b8 2px 3px, #f8f8fb 3px); border-radius: 0 0 10px 10px; }
  map-panel { grid-row: 1 / 3; }
  .pair { display: flex; gap: 14px; } .pair > * { flex: 1; }
  .schools { grid-column: 1 / 3; }
  .low { --head: 76px; --head-pad: 3px; }
  .rows { display: flex; flex-direction: column; padding: 20px 16px 0 26px; }
  .rows.roomy { padding-right: 44px; }
  .rows.tight { padding-right: 14px; }
</style>
<map-panel></map-panel>
<info-card heading="Postcode" style="--accent:#02a65a"><postcode-facts></postcode-facts></info-card>
<info-card heading="Suburb Snapshot" style="--accent:#3c8dbc;--split:872px"><div class="rows roomy">
  <data-row label="Median Age of Residents" value="35"></data-row>
  <data-row label="Individual Income per Week" value="$991"></data-row>
  <data-row label="Household Income per Week" value="$2,500"></data-row>
  <data-row label="Monthly Mortgage Repayments" value="$1,821"></data-row>
  <data-row label="Weekly Rent" value="$500"></data-row>
  <data-row label="Average Household Size" value="2"></data-row>
</div></info-card>
<info-card class="low" heading="Dwellings" style="--accent:#f39c12;--split:402px"><div class="rows tight">
  <data-row label="# of Dwellings" value="6,419"></data-row>
  <data-row kind="item" style="--h:72px" label="Houses" value="794"></data-row>
  <data-row kind="item" style="--h:72px" label="Townhouses" value="1,676"></data-row>
  <data-row kind="item" style="--h:72px" label="Flats/Apartments" value="3,945"></data-row>
</div></info-card>
<div class="pair">
  <info-card class="low" heading="Family Makeup" style="--accent:#dd4b39;--split:422px"><div class="rows">
    <data-row label="# of Families" value="2,560"></data-row>
    <data-row kind="item" style="--h:54px" label="with kids under 15" value="556"></data-row>
    <data-row kind="item" style="--h:54px" label="with kids over 15" value="312"></data-row>
    <data-row kind="item" style="--h:54px" label="no kids" value="1,592"></data-row>
    <data-row kind="group" style="--h:60px" label="Single Parent Families" value="288"></data-row>
    <data-row kind="item" style="--h:54px" label="with kids under 15" value="103"></data-row>
    <data-row kind="item" plain style="--h:54px" label="with kids over 15" value="184"></data-row>
  </div></info-card>
  <info-card class="low" heading="Home Ownership" style="--accent:#00c0ef;--split:406px"><div class="rows">
    <data-row label="# of Homes" value="5,771"></data-row>
    <data-row kind="item" style="--h:72px" label="Owned Outright" value="768"></data-row>
    <data-row kind="item" style="--h:72px" label="Paying a Mortgage" value="1,163"></data-row>
    <data-row kind="item" style="--h:72px" label="Renting" value="3,560"></data-row>
    <data-row kind="item" style="--h:72px" label="Other" value="282"></data-row>
  </div></info-card>
</div>
<info-card wide class="schools" heading="Schools Nearby" style="--accent:#c5dc52"><school-filters slot="extra"></school-filters>
  <school-list>
    <school-entry data-name="Our Lady of Mount Carmel Catholic Primary School" data-away="(621m away)" data-sector="Catholic Primary" data-years="K-6 Co-ed" data-enrol="Enrolments: 98 (54 boys/44 girls)" data-staff="Teaching Staff: 12 (8.2 : 1 ratio)"></school-entry>
    <school-entry data-name="Bourke Street Public School" data-away="(1.1km away)" data-sector="Government Primary" data-years="K-6 Co-ed" data-enrol="Enrolments: 417 (222 boys/195 girls)" data-staff="Teaching Staff: 24 (17.4 : 1 ratio)"></school-entry>
    <school-entry data-name="Sydney Distance Education Primary School" data-away="(1.1km away)" data-sector="Government Primary" data-years="K-6 Co-ed" data-enrol="Enrolments: 202 (92 boys/110 girls)" data-staff="Teaching Staff: 15 (13.5 : 1 ratio)"></school-entry>
    <school-entry data-name="Darlington Public School" data-away="(1.4km away)" data-sector="Government Primary" data-years="P-6 Co-ed" data-enrol="Enrolments: 234 (124 boys/110 girls)" data-staff="Teaching Staff: 18 (13.0 : 1 ratio)"></school-entry>
  </school-list>
</info-card>
<info-card heading="Travel Times from" style="--accent:#d63df5;--split:800px"><div class="rows roomy">
  <data-row label="Redfern, New South Wales, Australia to ..." value=""></data-row>
  <travel-row data-place="Sydney International Airport" data-time="19m" data-dist="8.4km"></travel-row>
  <travel-row data-place="Sydney Domestic Airport" data-time="19m" data-dist="6.3km"></travel-row>
</div></info-card>`);
</script>
</body>
</html>
